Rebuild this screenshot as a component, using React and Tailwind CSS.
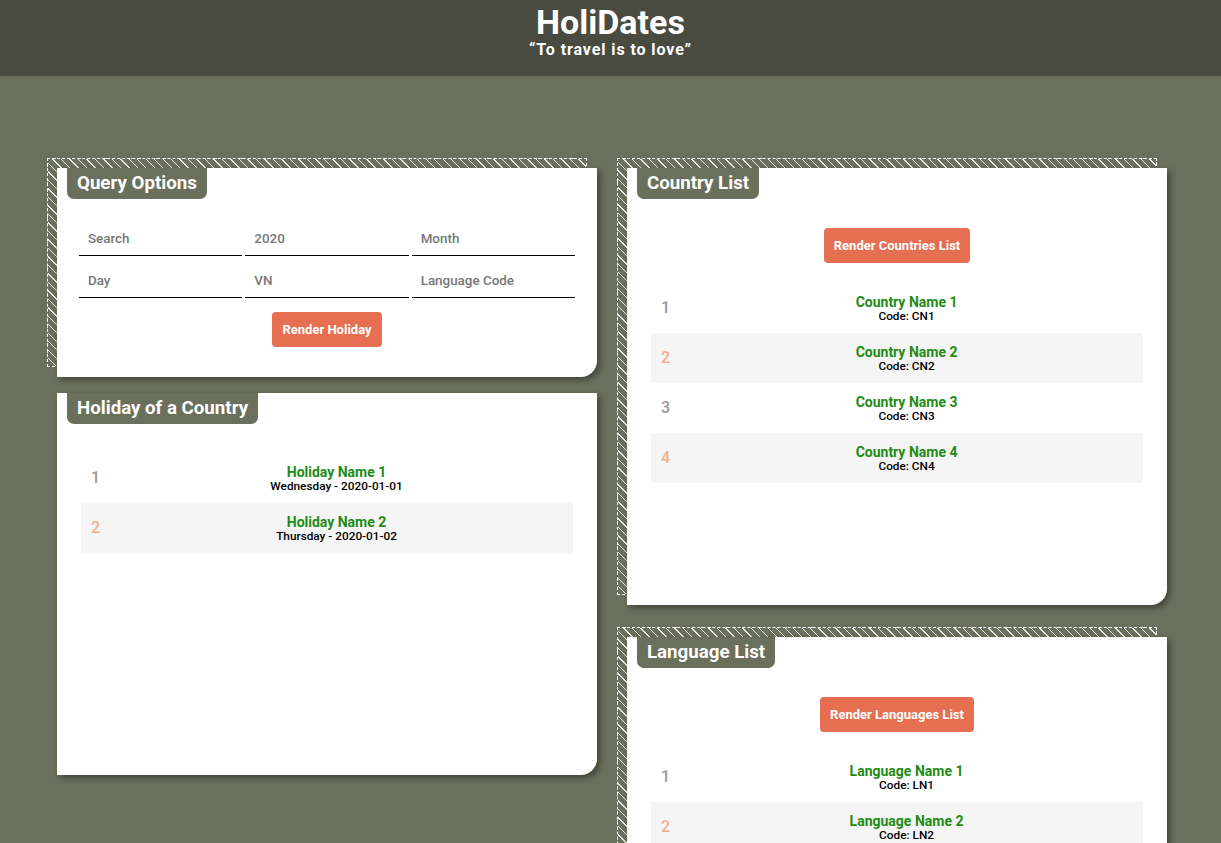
import React from "react";

function Tab({ children }) {
  return (
    <div className="ml-[10px] inline-block h-[31px] rounded-b-[7px] bg-[#6b705c] px-[10px] text-[18.7px] font-bold leading-[31px] text-white">
      {children}
    </div>
  );
}

function Card({ striped, title, children, className = "" }) {
  return (
    <div className={"relative " + className}>
      {striped && (
        <div className="absolute inset-0 -translate-x-[10px] -translate-y-[10px] border border-dashed border-white bg-[image:repeating-linear-gradient(45deg,transparent_0_5px,rgba(255,255,255,0.85)_5px_6px)]" />
      )}
      <div className="relative flex flex-col rounded-br-[16px] bg-white shadow-[3px_3px_6px_rgba(0,0,0,0.4)]">
        <div>
          <Tab>{title}</Tab>
        </div>
        {children}
      </div>
    </div>
  );
}

function Row({ index, title, sub }) {
  const even = index % 2 === 0;
  return (
    <div className={"flex h-[50px] items-center " + (even ? "bg-[#f5f5f5]" : "bg-white")}>
      <span className={"pl-[10px] text-[16px] font-medium " + (even ? "text-[#f6ad8f]" : "text-[#999999]")}>
        {index}
      </span>
      <div className="flex flex-1 flex-col items-center">
        <div className="text-[14px] font-bold leading-[16px] text-[#228b14]">{title}</div>
        <div className="text-[11.8px] font-medium leading-[13px] text-black">{sub}</div>
      </div>
    </div>
  );
}

function Button({ children }) {
  return (
    <button className="h-[35px] rounded-[4px] bg-[#e76f51] px-[10px] text-[13px] font-bold text-white">
      {children}
    </button>
  );
}

function Field({ placeholder }) {
  return (
    <input
      placeholder={placeholder}
      className="h-[42px] w-full border-b border-black bg-transparent pl-[9px] pt-[7px] text-[13.4px] font-medium outline-none placeholder:text-[#777777]"
    />
  );
}

export default function App() {
  const holidays = [
    { t: "Holiday Name 1", s: "Wednesday - 2020-01-01" },
    { t: "Holiday Name 2", s: "Thursday - 2020-01-02" },
  ];
  const countries = [1, 2, 3, 4].map((n) => ({ t: `Country Name ${n}`, s: `Code: CN${n}` }));
  const languages = [1, 2, 3, 4].map((n) => ({ t: `Language Name ${n}`, s: `Code: LN${n}` }));

  return (
    <div className="min-h-screen bg-[#6b705c] font-['Roboto',sans-serif]">
      <header className="flex h-[76px] flex-col items-center bg-[#4a4b40] pt-[3px] text-white">
        <h1 className="text-[34px] font-bold leading-[38px]">HoliDates</h1>
        <p className="text-[16px] font-bold leading-[18px] tracking-[0.9px]">“To travel is to love”</p>
      </header>

      <main className="flex gap-[30px] pb-[40px] pl-[57px] pt-[92px]">
        <div className="flex w-[540px] flex-col gap-[16px]">
          <Card striped title="Query Options">
            <div className="mt-[15px] grid grid-cols-3 gap-x-[3px] px-[22px]">
              <Field placeholder="Search" />
              <Field placeholder="2020" />
              <Field placeholder="Month" />
              <Field placeholder="Day" />
              <Field placeholder="VN" />
              <Field placeholder="Language Code" />
            </div>
            <div className="mt-[14px] flex justify-center pb-[30px]">
              <Button>Render Holiday</Button>
            </div>
          </Card>

          <Card title="Holiday of a Country">
            <div className="mt-[29px] min-h-[300px] px-[24px]">
              {holidays.map((h, i) => (
                <Row key={i} index={i + 1} title={h.t} sub={h.s} />
              ))}
            </div>
            <div className="h-[22px]" />
          </Card>
        </div>

        <div className="flex w-[540px] flex-col gap-[32px]">
          <Card striped title="Country List">
            <div className="mt-[29px] flex justify-center">
              <Button>Render Countries List</Button>
            </div>
            <div className="mt-[20px] min-h-[300px] px-[24px]">
              {countries.map((h, i) => (
                <Row key={i} index={i + 1} title={h.t} sub={h.s} />
              ))}
            </div>
            <div className="h-[22px]" />
          </Card>

          <Card striped title="Language List">
            <div className="mt-[29px] flex justify-center">
              <Button>Render Languages List</Button>
            </div>
            <div className="mt-[20px] min-h-[300px] px-[24px]">
              {languages.map((h, i) => (
                <Row key={i} index={i + 1} title={h.t} sub={h.s} />
              ))}
            </div>
            <div className="h-[22px]" />
          </Card>
        </div>
      </main>
    </div>
  );
}
